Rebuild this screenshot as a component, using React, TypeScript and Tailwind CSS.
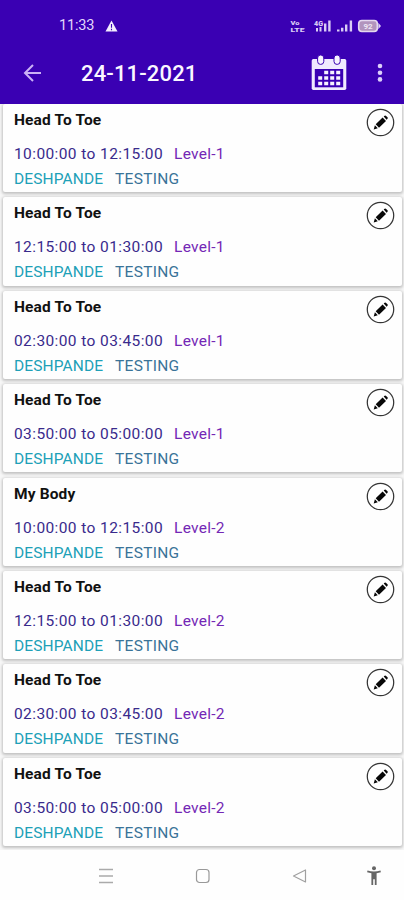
import React from "react";

type Session = { title: string; from: string; to: string; level: string };

const sessions: Session[] = [
  { title: "Head To Toe", from: "10:00:00", to: "12:15:00", level: "Level-1" },
  { title: "Head To Toe", from: "12:15:00", to: "01:30:00", level: "Level-1" },
  { title: "Head To Toe", from: "02:30:00", to: "03:45:00", level: "Level-1" },
  { title: "Head To Toe", from: "03:50:00", to: "05:00:00", level: "Level-1" },
  { title: "My Body", from: "10:00:00", to: "12:15:00", level: "Level-2" },
  { title: "Head To Toe", from: "12:15:00", to: "01:30:00", level: "Level-2" },
  { title: "Head To Toe", from: "02:30:00", to: "03:45:00", level: "Level-2" },
  { title: "Head To Toe", from: "03:50:00", to: "05:00:00", level: "Level-2" },
];

function WarningIcon() {
  return (
    <svg className="ml-[10px] h-3 w-[13px]" viewBox="0 0 13 12">
      <path d="M6.5 0.5 12.5 11.5H0.5Z" fill="#f4edff" />
      <path d="M6.5 4v3.7M6.5 8.7v1.5" stroke="#3a00b3" strokeWidth="1.1" />
    </svg>
  );
}

function SignalIcons() {
  return (
    <svg className="h-[14px] w-[92px]" viewBox="0 0 92 14" fill="#d9ccf5">
      <g fontFamily="Roboto, sans-serif" fontWeight="900">
        <text x="0.5" y="6.2" fontSize="6" textLength="9" lengthAdjust="spacingAndGlyphs">Vo</text>
        <text x="0.5" y="13.2" fontSize="6" textLength="14" lengthAdjust="spacingAndGlyphs">LTE</text>
        <text x="24" y="6.6" fontSize="7" textLength="9" lengthAdjust="spacingAndGlyphs">4G</text>
      </g>
      <path d="M26 9h2v3.5h-2zM29.5 8h2v4.5h-2zM34 4.5h2.4v8H34zM38.2 1.5h2.4v11h-2.4z" />
      <path d="M47 10.5h2.5v2h-2.5zM51 8.7h2.4v3.8H51zM55 5.5h2.4v7H55zM59.7 1.5h2.4v11h-2.4z" />
      <rect x="68.7" y="1.5" width="18.6" height="11" rx="3.2" fill="#b294bd" stroke="#e4d8ee" strokeWidth="1.6" />
      <path d="M88.3 3.8 91 7l-2.7 3.2z" />
      <text x="73.5" y="9.8" fontSize="8" fontFamily="Roboto, sans-serif" fontWeight="700" fill="#efe6f4">92</text>
    </svg>
  );
}

function BackIcon() {
  return (
    <svg className="h-[18px] w-[19px]" viewBox="0 0 19 18" fill="none" stroke="#cbb2f6" strokeWidth="2">
      <path d="M18 9H2M10 1 2 9l8 8" />
    </svg>
  );
}

function CalendarIcon() {
  return (
    <svg className="h-9 w-9" viewBox="0 0 36 36">
      <rect x="0.7" y="4" width="34.6" height="31" rx="1.7" fill="#f0eaff" />
      <path d="M3.8 14h28.4v18.3H3.8z" fill="#3a00b3" />
      <g fill="#f7f3ff" stroke="#3a00b3" strokeWidth="1">
        <rect x="6.6" y="0" width="6.2" height="9.4" rx="3" />
        <rect x="23" y="0" width="6.2" height="9.4" rx="3" />
      </g>
      <path
        fill="#f7f3ff"
        d="M13.2 15.7h4v3.5h-4zM19.2 15.7h4v3.5h-4zM25.2 15.7h4v3.5h-4zM7.2 21.2h4v3.5h-4zM13.2 21.2h4v3.5h-4zM19.2 21.2h4v3.5h-4zM25.2 21.2h4v3.5h-4zM7.2 26.8h4v3.5h-4zM13.2 26.8h4v3.5h-4zM19.2 26.8h4v3.5h-4zM25.2 26.8h4v3.5h-4z"
      />
    </svg>
  );
}

function EditIcon() {
  return (
    <svg className="h-[29px] w-[29px]" viewBox="0 0 29 29">
      <circle cx="14.5" cy="14.5" r="13.2" fill="#fff" stroke="#353535" strokeWidth="1.25" />
      <path d="M9.7 16.3 16.6 9.6l3.4 3.5-7 6.6zM17.7 8.6l.9-.8q.8-.6 1.5.1l1.4 1.4q.6.8 0 1.5l-.9.9zM8.9 17.2l2.9 3-4.1 1.2z" fill="#080808" />
    </svg>
  );
}

function SessionCard({ title, from, to, level }: Session) {
  return (
    <article className="flex h-[88.3px] shrink-0 justify-between rounded-[2px] bg-[#fefefe] pl-[11.5px] pr-[7.5px] shadow-[0_1px_3px_1px_rgba(0,0,0,0.22)]">
      <div className="whitespace-nowrap">
        <h2 className="mt-[6px] text-[15.5px] font-bold leading-5 tracking-[0.15px] text-[#111]">{title}</h2>
        <p className="mt-[14px] flex text-[15.5px] leading-5">
          <span className="w-40 tracking-[0.4px] text-[#392a8c]">{from} to {to}</span>
          <span className="tracking-[0.28px] text-[#7427b5]">{level}</span>
        </p>
        <p className="mt-[5px] flex text-[15.5px] leading-5">
          <span className="w-[101px] tracking-[0.12px] text-[#20a0b7]">DESHPANDE</span>
          <span className="tracking-[0.3px] text-[#397398]">TESTING</span>
        </p>
      </div>
      <button aria-label="Edit" className="mt-1 h-[29px] w-[29px]">
        <EditIcon />
      </button>
    </article>
  );
}

export default function App() {
  return (
    <div className="flex h-[900px] w-[404px] flex-col overflow-hidden bg-[#fefefe] font-[Roboto,sans-serif]">
      <header className="z-10 h-[104px] shrink-0 bg-[#3a00b3]">
        <div className="flex h-[52px] items-center pl-[59px] pr-[22px]">
          <span className="w-9 text-[14.5px] leading-5 tracking-[-0.2px] text-[#e3d8fb]">11:33</span>
          <WarningIcon />
          <div className="ml-auto flex"><SignalIcons /></div>
        </div>
        <div className="flex h-[42px] items-center pl-[23px] pr-[21px]">
          <BackIcon />
          <h1 className="ml-[39px] pt-px text-[22px] font-medium leading-7 tracking-[0.15px] text-[#faf7ff]">24-11-2021</h1>
          <div className="ml-auto flex items-center gap-[30px]">
            <CalendarIcon />
            <svg className="h-5 w-[6px]" viewBox="0 0 6 20" fill="#dccffa">
              <circle cx="3" cy="3" r="2.3" /><circle cx="3" cy="9.7" r="2.3" /><circle cx="3" cy="16.4" r="2.3" />
            </svg>
          </div>
        </div>
      </header>
      <main className="flex h-[746px] shrink-0 flex-col gap-[5.08px] bg-[#f7f7f7] pl-[2.5px] pr-[2px]">
        {sessions.map((session, index) => <SessionCard key={index} {...session} />)}
      </main>
      <nav className="z-10 flex h-[50px] items-center bg-[#fefefe] pl-[99px] pr-[22px] pt-px">
        <svg className="h-4 w-[14px]" viewBox="0 0 14 16" stroke="#aaa" strokeWidth="1.3">
          <path d="M0 1.5h14M0 8h14M0 14.5h14" />
        </svg>
        <svg className="ml-[82px] h-4 w-4" viewBox="0 0 16 16" fill="none" stroke="#999" strokeWidth="1.2">
          <rect x="1.5" y="1.5" width="12.5" height="13" rx="3" />
        </svg>
        <svg className="ml-[81px] h-4 w-4" viewBox="0 0 16 16" fill="none" stroke="#a0a0a0" strokeWidth="1.2" strokeLinejoin="round">
          <path d="M13.5 2v12L1.5 8z" />
        </svg>
        <svg className="ml-auto h-[19px] w-4" viewBox="0 0 16 19" fill="#666">
          <circle cx="8" cy="2.2" r="2" />
          <path d="M1.5 4.5Q8 6.5 14.5 4.5l.4 1.8-4.3 1V19H8.8v-5.7H7.2V19H5.4V7.3l-4.3-1z" />
        </svg>
      </nav>
    </div>
  );
}
